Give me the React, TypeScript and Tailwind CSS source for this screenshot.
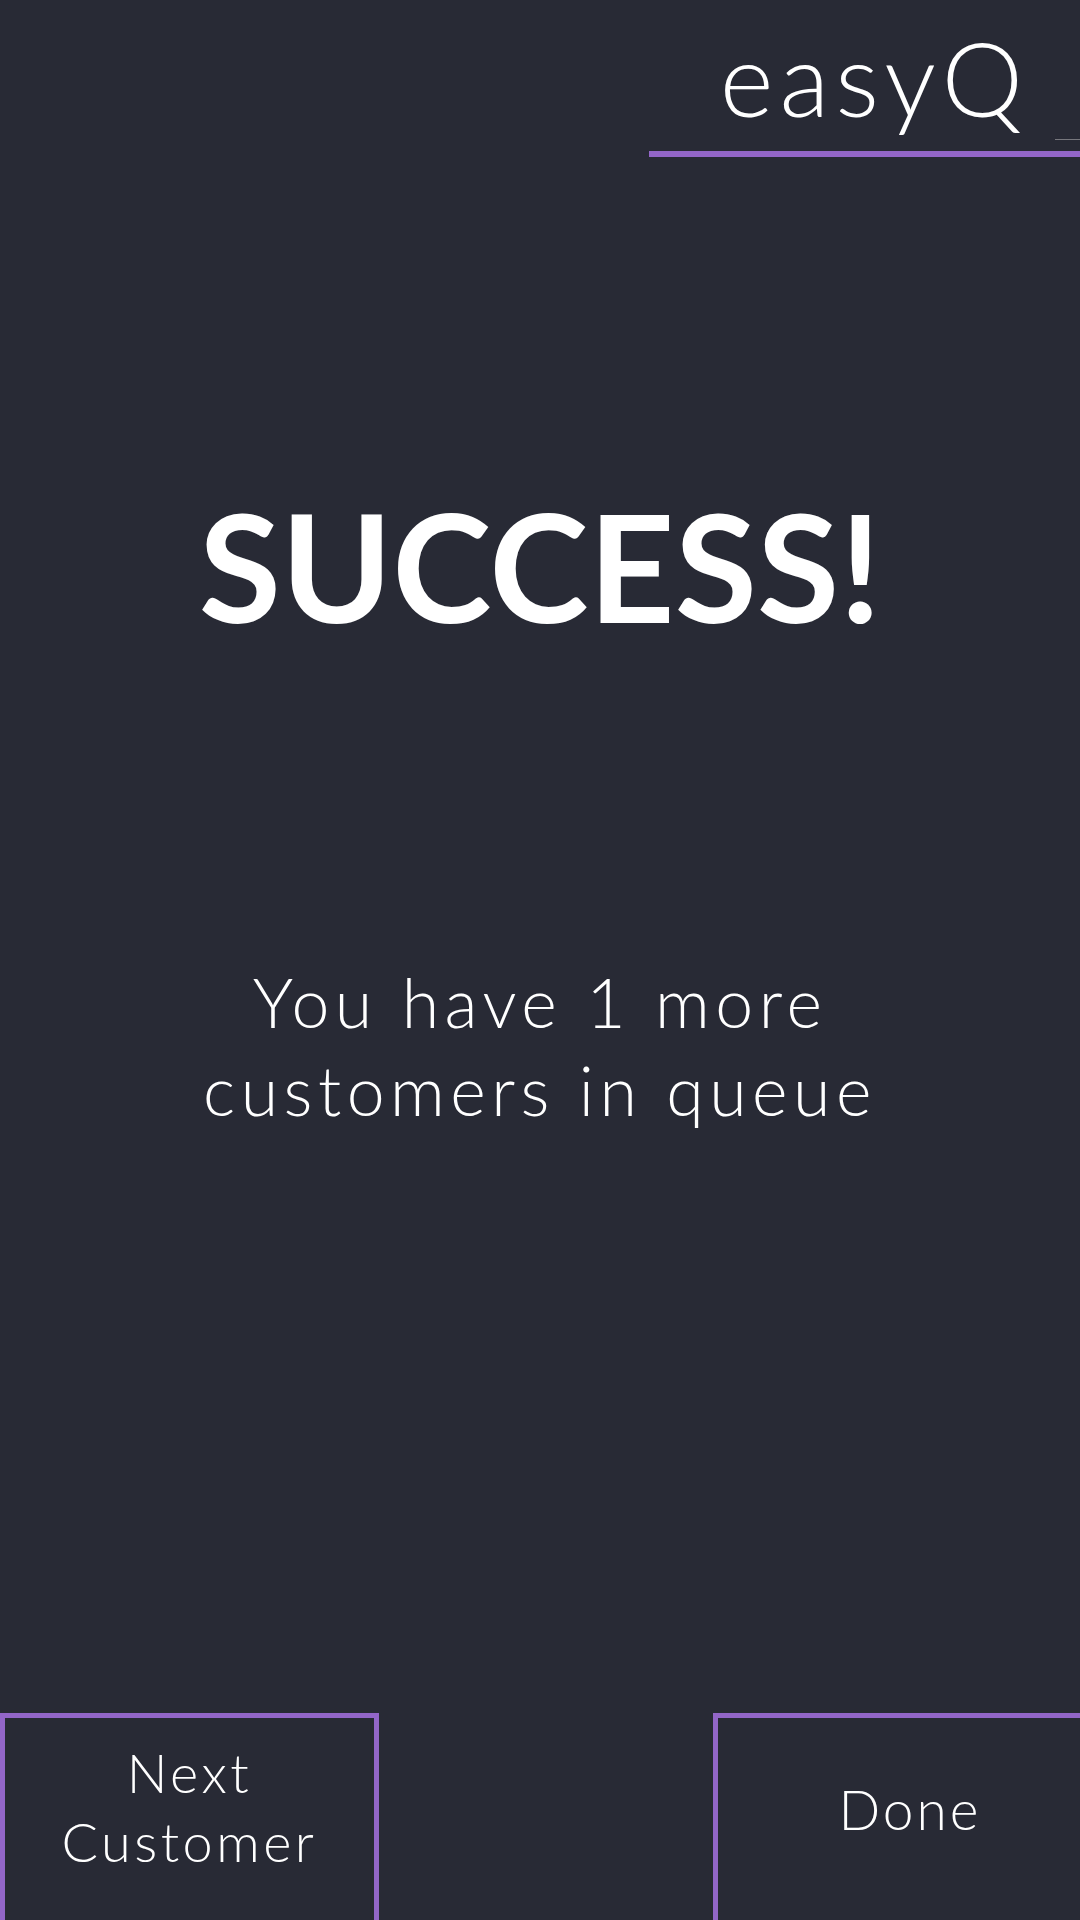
import React from "react";

export default function App() {
  return (
    <div className="w-[1080px] h-[1920px] bg-[#282a35] flex flex-col overflow-hidden text-white font-['Lato','Open_Sans',sans-serif]">
      {/* Header */}
      <div className="flex flex-col items-end pt-[26px]">
        <div className="flex items-start">
          <span className="text-[103px] leading-[103px] font-light tracking-[6px]">easyQ</span>
          <div className="w-[25px] h-[1px] bg-[#77777d] ml-[26px] mt-[113px]" />
        </div>
        <div className="w-[431px] h-[6px] bg-[#9366c8] mt-[11px]" />
      </div>

      {/* Main */}
      <div className="flex flex-col items-center flex-1">
        <h1 className="mt-[333px] text-[150px] leading-[150px] font-bold">SUCCESS!</h1>
        <p className="mt-[318px] text-[68px] leading-[88px] font-light text-center tracking-[5.5px]">
          You have 1 more
          <br />
          customers in queue
        </p>
      </div>

      {/* Buttons */}
      <div className="flex items-start h-[207px] shrink-0">
        <button className="w-[379px] h-[230px] shrink-0 border-[5px] border-[#9366c8] flex flex-col items-center pt-[20px] text-[54px] leading-[69px] font-light tracking-[3.5px]">
          <span>Next</span>
          <span>Customer</span>
        </button>
        <button className="ml-[334px] w-[394px] h-[230px] shrink-0 border-[5px] border-[#9366c8] flex flex-col items-center pt-[57px] text-[55px] leading-[69px] font-light tracking-[3px]">
          <span>Done</span>
        </button>
      </div>
    </div>
  );
}
